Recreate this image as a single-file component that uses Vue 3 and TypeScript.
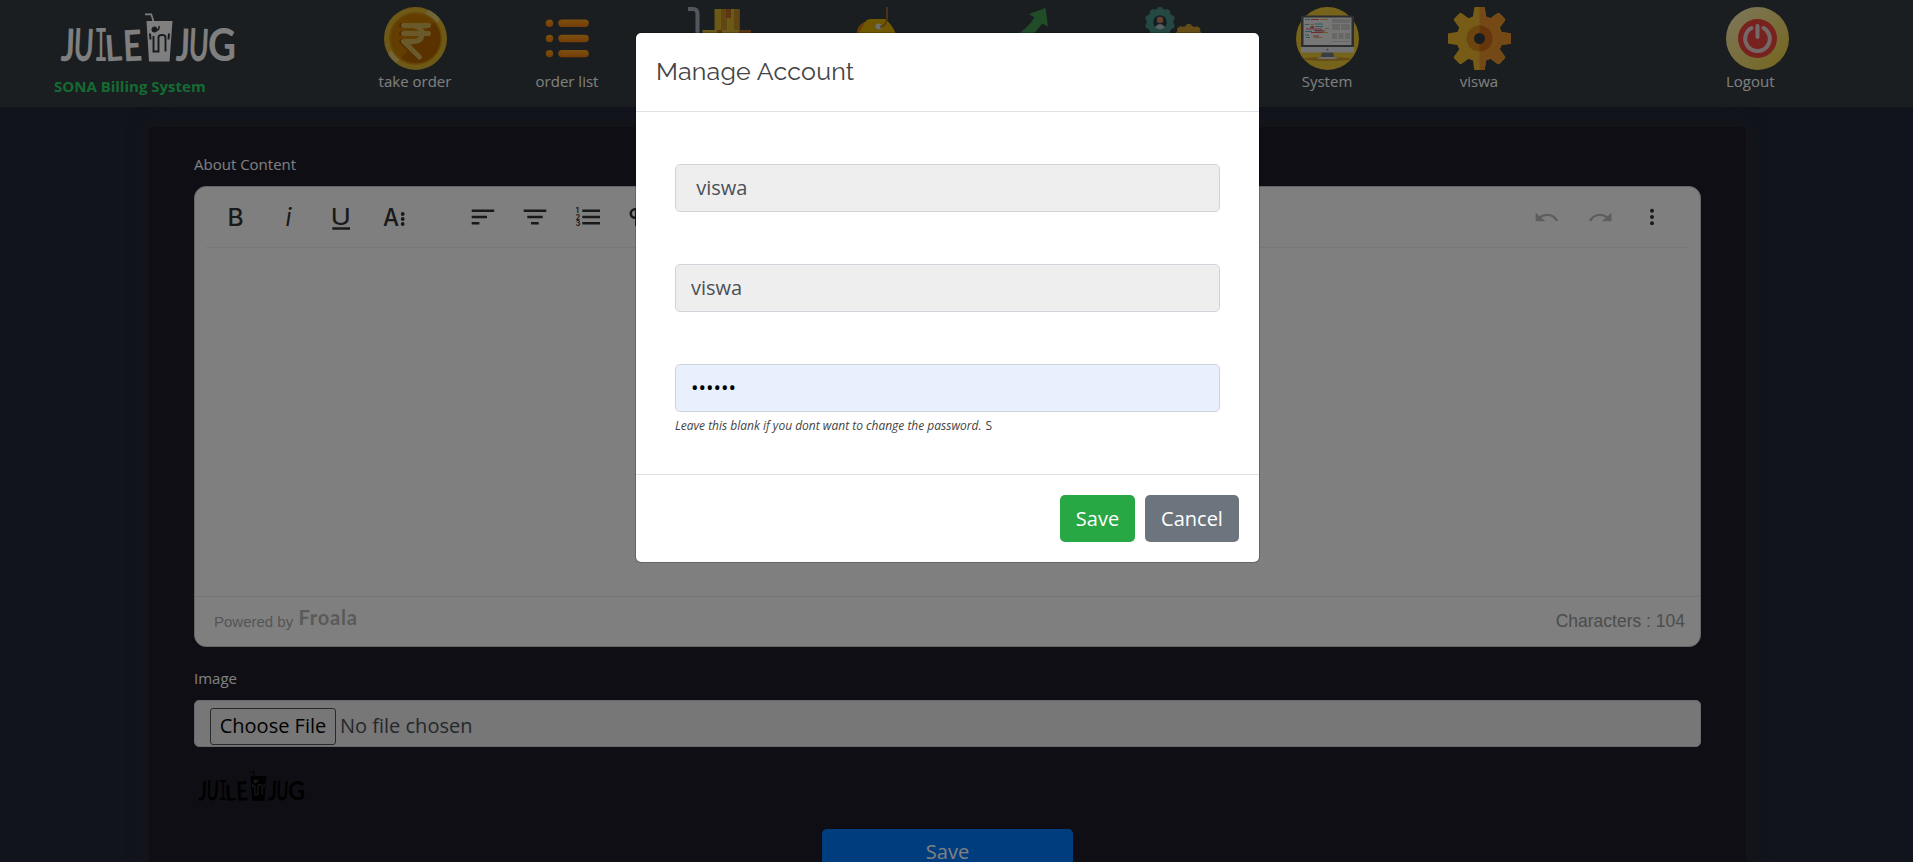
<script setup lang="ts">
import { ref } from 'vue'

interface NavItem {
  icon: string
  label: string
}

const navItems: NavItem[] = [
  { icon: 'rupee', label: 'take order' },
  { icon: 'list', label: 'order list' },
  { icon: 'cart', label: '' },
  { icon: 'tag', label: '' },
  { icon: 'arrow', label: '' },
  { icon: 'gears', label: '' },
  { icon: 'system', label: 'System' },
  { icon: 'gear', label: 'viswa' },
]

const name = ref(' viswa')
const username = ref('viswa')
const password = ref('secret')
const characters = 104
const teeth = [0, 45, 90, 135, 180, 225, 270, 315]
const smallTeeth = [0, 36, 72, 108, 144, 180, 216, 252, 288, 324]
</script>

<template>
  <div class="page">
    <svg class="defs" width="0" height="0" aria-hidden="true">
      <defs>
        <linearGradient id="pill" x1="0" y1="0" x2="0" y2="1">
          <stop offset="0" stop-color="#f9a01c" />
          <stop offset="1" stop-color="#ea7a0c" />
        </linearGradient>
        <linearGradient id="gold" x1="0" y1="0" x2="1" y2="1">
          <stop offset="0" stop-color="#fdefbd" />
          <stop offset="1" stop-color="#e8cc38" />
        </linearGradient>
        <symbol id="logo" viewBox="0 0 176 52">
          <g font-family="Lato, sans-serif" font-weight="700" fill="currentColor" stroke="none">
            <g font-size="45">
              <text x="1" y="48" textLength="14" lengthAdjust="spacingAndGlyphs" transform="rotate(2 8 30)">J</text>
              <text x="14" y="48" textLength="20" lengthAdjust="spacingAndGlyphs" transform="rotate(3 24 30)">U</text>
              <text
                x="34"
                y="47.500"
                font-family="DejaVu Sans Mono, monospace"
                font-size="44"
                font-weight="400"
                textLength="14"
                lengthAdjust="spacingAndGlyphs"
              >I</text>
              <text x="45" y="48" font-size="36" textLength="17" lengthAdjust="spacingAndGlyphs" transform="rotate(-4 53 36)">L</text>
              <text x="63" y="48" font-size="43" textLength="19" lengthAdjust="spacingAndGlyphs" transform="rotate(-3 72 32)">E</text>
              <text x="116" y="48" textLength="14" lengthAdjust="spacingAndGlyphs" transform="rotate(2 124 30)">J</text>
              <text x="129" y="48" textLength="20" lengthAdjust="spacingAndGlyphs" transform="rotate(3 140 30)">U</text>
              <text x="148" y="48" textLength="28" lengthAdjust="spacingAndGlyphs">G</text>
            </g>
          </g>
          <path d="M85 1.300h6.300l2.400 8" fill="none" stroke="currentColor" stroke-width="1.700" />
          <path d="M86.500 8h26l-3 40.500h-20.500z" fill="currentColor" />
          <g class="logo-cut">
            <path d="M93.500 23v15.500h5V24q0-2 3.500-2t3.500 2v14.500" fill="none" stroke-width="1.900" />
            <circle cx="94.500" cy="16.500" r="2.600" />
            <path d="M95 17q5 1 4-4" fill="none" stroke-width="1.500" />
            <path d="M90 20.500l.5 6M109 20.500l-.5 6" stroke-width="2" />
          </g>
        </symbol>
      </defs>
    </svg>

    <header class="navbar">
      <div class="brand">
        <svg class="logo" viewBox="0 0 176 52"><use href="#logo" /></svg>
        <span class="brand-name">SONA Billing System</span>
      </div>

      <nav class="nav">
        <a v-for="item in navItems" :key="item.icon" class="nav-item">
          <svg v-if="item.icon === 'rupee'" class="nav-icon" viewBox="0 0 63 63">
            <circle cx="31.500" cy="31.500" r="31.500" fill="#dcb42c" />
            <path d="M45 3a31.500 31.500 0 0 1 11 9L12 56a31 31 0 0 1-8-9z" fill="#e3ca72" />
            <circle cx="31.500" cy="31.500" r="26.500" fill="#cd9210" />
            <circle cx="31.500" cy="31.500" r="24.500" fill="#c77c00" />
            <path d="M50 15a24.500 24.500 0 0 1-33 36z" fill="#b46500" />
            <g fill="none" stroke="#a85700" stroke-width="5" stroke-linecap="round">
              <path d="M17.500 18.500h26M17.500 26.500h26M17.500 34.500l16 15" />
            </g>
            <g fill="none" stroke="#d5b456" stroke-width="5" stroke-linecap="round" stroke-linejoin="round">
              <path d="M19.500 18.500h25M19.500 26.500h25M31 19q7 2 7 7.500 0 8-9 8h-9.500l16 15.500" />
            </g>
          </svg>

          <svg v-else-if="item.icon === 'list'" class="nav-icon" viewBox="0 0 63 63">
            <g v-for="y in [16.300, 31.500, 46.600]" :key="y">
              <circle cx="13.500" :cy="y" r="3.700" fill="url(#pill)" />
              <rect x="22.300" :y="y - 3.700" width="30.500" height="7.400" rx="3.700" fill="url(#pill)" />
            </g>
          </svg>

          <svg v-else-if="item.icon === 'cart'" class="nav-icon" viewBox="0 0 63 63">
            <path d="M0 2h5q4.500 0 4.500 5v38h47" fill="none" stroke="#a7adb8" stroke-width="4" />
            <path d="M26.500 2h25v21h-25z" fill="#d6b52e" />
            <path d="M33 2h6v21h-6zM46 2h5.500v21H46z" fill="#c38b24" />
            <path d="M38 2h5v9h-5z" fill="#bd6a27" />
            <path d="M14.500 23h49v19h-49z" fill="#d6b52e" />
            <path d="M29 23h5v3h-5zM51 23h12v3H51z" fill="#b96a25" />
          </svg>

          <svg v-else-if="item.icon === 'tag'" class="nav-icon" viewBox="0 0 63 63">
            <path d="M16.500 27q1-9 7-11.500L29 13v14z" fill="#d27a10" />
            <path d="M18.500 27L24 17q2-5 7-5h14q7 5 11 15v20H18z" fill="#e0b000" />
            <circle cx="38.500" cy="19.500" r="3" fill="#ddd" />
            <path d="M47 0v12q-1 7-7 8" fill="none" stroke="#a66b2c" stroke-width="1.700" />
          </svg>

          <svg v-else-if="item.icon === 'arrow'" class="nav-icon" viewBox="0 0 63 63">
            <path d="M53.500 1L56 19.500l-6-3Q44 26 33 34H12Q33 26 42.500 10.500L37 7z" fill="#429850" />
          </svg>

          <svg v-else-if="item.icon === 'gears'" class="nav-icon" viewBox="0 0 63 63">
            <g fill="#489086">
              <rect
                v-for="a in smallTeeth"
                :key="a"
                x="13.500"
                y="0"
                width="5"
                height="8"
                rx="1.500"
                :transform="`rotate(${a} 16 15)`"
              />
              <circle cx="16" cy="15" r="13.500" />
            </g>
            <circle cx="16" cy="15" r="6.800" fill="#283c41" />
            <circle cx="16" cy="13" r="3.200" fill="#c9825d" />
            <path d="M11 20q5-6 10 0l-3 2h-4z" fill="#b7c2c4" />
            <g fill="#c99b2e">
              <rect
                v-for="a in smallTeeth"
                :key="a"
                x="42"
                y="17"
                width="5.500"
                height="8"
                rx="1.500"
                :transform="`rotate(${a} 44.700 34)`"
              />
              <circle cx="44.700" cy="34" r="15.300" />
            </g>
          </svg>

          <svg v-else-if="item.icon === 'system'" class="nav-icon" viewBox="0 0 63 63">
            <circle cx="31.500" cy="31.500" r="31.500" fill="#edc639" />
            <ellipse cx="31.500" cy="52" rx="24" ry="1.800" fill="#c9962b" />
            <path d="M26 45h11l1.500 6h-14z" fill="#777c80" />
            <path d="M21 52q2-2 5-2h11q3 0 5 2z" fill="#d8dadd" />
            <rect x="5" y="8.500" width="53" height="33" rx="1.500" fill="#5b5c61" />
            <path d="M5 40h53v4q0 1.500-1.500 1.500h-50Q5 45.500 5 44z" fill="#e5e6e8" />
            <rect x="7.500" y="10.500" width="48" height="27.500" fill="#eee" />
            <circle cx="31.500" cy="42.700" r="1" fill="#888" />
            <g stroke-width="1">
              <path d="M9 12.500h5M9 17.500h4M19 17h8M19 19.500h8M18 23.500h9M9 24.500h7M10 30.500h4M9 28h4" stroke="#57b8b2" />
              <path d="M15 12.500h8M15 19.500h3M14 20.500h4M10 22h16M19 24h10M15 25.500h14M17 29h6" stroke="#d95d62" />
              <path d="M24 12.500h8M14 17.500h4M29 21.500h4M27 25.500h5M18 30.500h8" stroke="#d9b94e" />
            </g>
            <path
              d="M36 12h18v4H36zM36 17h8v6h-8zM45 17h9v6h-9zM36 26h5v6h-5zM42.500 26h5v6h-5zM49 26h5v6h-5zM36 34h18v1H36z"
              fill="#cfd1cc"
            />
          </svg>

          <svg v-else class="nav-icon" viewBox="0 0 63 63">
            <g fill="#edb92d">
              <path
                v-for="a in teeth"
                :key="a"
                d="M24.500 12l1.700-11q.2-1.500 1.600-1.500h7.400q1.400 0 1.600 1.500l1.700 11z"
                :transform="`rotate(${a} 31.500 31.500)`"
              />
              <circle cx="31.500" cy="31.500" r="23" />
            </g>
            <clipPath id="right-half"><rect x="31.500" y="0" width="31.500" height="63" /></clipPath>
            <g fill="#e8932c" clip-path="url(#right-half)">
              <path
                v-for="a in teeth"
                :key="a"
                d="M24.500 12l1.700-11q.2-1.500 1.600-1.500h7.400q1.400 0 1.600 1.500l1.700 11z"
                :transform="`rotate(${a} 31.500 31.500)`"
              />
              <circle cx="31.500" cy="31.500" r="23" />
            </g>
            <circle cx="31.500" cy="31.500" r="13" fill="#d98a1f" />
            <path d="M31.500 18.500a13 13 0 0 1 0 26z" fill="#cf6a16" />
            <circle cx="31.500" cy="31.500" r="5.500" fill="#343d40" />
          </svg>
          <span class="nav-label">{{ item.label }}</span>
        </a>
      </nav>

      <a class="logout">
        <svg class="nav-icon" viewBox="0 0 63 63">
          <circle cx="31.500" cy="31.500" r="31.500" fill="url(#gold)" />
          <circle cx="31.500" cy="31.500" r="19.500" fill="#f0443e" />
          <g fill="none" stroke="#e8d2d0" stroke-width="4" stroke-linecap="round">
            <path d="M25.500 21a12.300 12.300 0 1 0 12 0M31.500 19v11" />
          </g>
        </svg>
        <span class="nav-label">Logout</span>
      </a>
    </header>

    <main class="panel">
      <label class="field-label">About Content</label>
      <section class="editor">
        <div class="toolbar">
          <div class="tools">
            <svg class="tool" viewBox="0 0 53 60">
              <text x="18.500" y="39" font-size="24.500" font-weight="500">B</text>
            </svg>
            <svg class="tool" viewBox="0 0 53 60">
              <text x="23.500" y="39" font-size="24.500" font-weight="400" font-style="italic">i</text>
            </svg>
            <svg class="tool" viewBox="0 0 53 60">
              <text x="15.500" y="37.500" font-size="23.500" font-weight="400" textLength="20.500" lengthAdjust="spacingAndGlyphs">U</text>
              <path d="M17.300 41.500H35" />
            </svg>
            <svg class="tool" viewBox="0 0 53 60">
              <text x="15" y="39" font-size="24.500" font-weight="500" textLength="16" lengthAdjust="spacingAndGlyphs">A</text>
              <circle v-for="y in [27, 32, 37]" :key="y" cx="34.700" :cy="y" r="1.900" />
            </svg>
          </div>
          <div class="tools">
            <svg class="tool" viewBox="0 0 53 60"><path d="M14.700 23.700H37.200M14.700 30H30M14.700 36.300h7.700" /></svg>
            <svg class="tool" viewBox="0 0 53 60"><path d="M13.700 23.700h22.600M17.300 30h15.400M21 36.300h7.700" /></svg>
            <svg class="tool" viewBox="0 0 53 60">
              <path d="M19.300 23.700H37M19.300 30H37M19.300 36.300H37" />
              <g font-size="7" font-weight="700">
                <text x="12.700" y="26.200">1</text>
                <text x="12.700" y="32.500">2</text>
                <text x="12.700" y="39">3</text>
              </g>
            </svg>
            <svg class="tool" viewBox="0 0 53 60">
              <path d="M29 22.300H19a4.200 4.200 0 0 0 0 8.500h1.500M20.300 22v17M26 22v17" />
            </svg>
          </div>
          <div class="tools tools-end">
            <svg class="tool disabled" viewBox="0 0 53 60">
              <path
                transform="translate(13.500 19) scale(1.100 .96)"
                d="M12.500 8c-2.650 0-5.050.99-6.900 2.600L2 7v9h9l-3.620-3.620c1.390-1.160 3.160-1.880 5.120-1.880 3.540 0 6.550 2.310 7.600 5.500l2.370-.78C21.080 11.030 17.150 8 12.500 8z"
              />
            </svg>
            <svg class="tool disabled" viewBox="0 0 53 60">
              <path
                transform="translate(40.700 19) scale(-1.100 .96)"
                d="M12.500 8c-2.650 0-5.050.99-6.900 2.600L2 7v9h9l-3.620-3.620c1.390-1.160 3.160-1.880 5.120-1.880 3.540 0 6.550 2.310 7.600 5.500l2.370-.78C21.080 11.030 17.150 8 12.500 8z"
              />
            </svg>
            <svg class="tool" viewBox="0 0 53 60">
              <circle v-for="y in [23.700, 30, 36.300]" :key="y" cx="26" :cy="y" r="2" />
            </svg>
          </div>
        </div>
        <div class="canvas"></div>
        <footer class="editor-foot">
          <span class="powered">Powered by <b>Froala</b></span>
          <span class="count">Characters : {{ characters }}</span>
        </footer>
      </section>

      <label class="field-label image-label">Image</label>
      <div class="file">
        <button type="button" class="choose">Choose File</button>
        <span>No file chosen</span>
      </div>
      <svg class="thumb" viewBox="0 0 176 52"><use href="#logo" /></svg>
      <button type="button" class="save">Save</button>
    </main>

    <div class="backdrop">
      <form class="modal" @submit.prevent>
        <header class="modal-head"><h5>Manage Account</h5></header>
        <div class="modal-body">
          <input v-model="name" class="control" type="text" />
          <input v-model="username" class="control" type="text" />
          <input v-model="password" class="control filled" type="password" />
          <small class="hint"><i>Leave this blank if you dont want to change the password.</i> <span>S</span></small>
        </div>
        <footer class="modal-foot">
          <button type="submit" class="btn green">Save</button>
          <button type="button" class="btn grey">Cancel</button>
        </footer>
      </form>
    </div>
  </div>
</template>

<style>
body {
  margin: 0;
  overflow: hidden;
}
</style>

<style scoped>
* {
  box-sizing: border-box;
}
.page {
  position: relative;
  height: 862px;
  overflow: hidden;
  background: #222839;
  color: #fff;
  font-family: 'Open Sans', sans-serif;
  font-size: 15px;
}
.defs {
  position: absolute;
}
.navbar {
  display: flex;
  height: 107px;
  background: #343c40;
}
.brand {
  display: flex;
  flex-direction: column;
  width: 339px;
  padding: 13px 0 0 54px;
}
.logo {
  width: 176px;
  height: 52px;
  margin-left: 6px;
  color: #fff;
}
.logo-cut {
  stroke: #30373a;
  fill: #30373a;
}
.brand-name {
  margin-top: 11px;
  color: #28d565;
  font-weight: 700;
  line-height: 20px;
}
.nav {
  display: flex;
  width: 1216px;
}
.nav-item {
  display: flex;
  flex-direction: column;
  align-items: center;
  width: 152px;
  padding-top: 7px;
}
.nav-icon {
  width: 63px;
  height: 63px;
}
.nav-label {
  height: 22px;
  line-height: 22px;
}
.logout {
  display: flex;
  flex-direction: column;
  padding: 7px 0 0 171px;
}
.panel {
  display: flex;
  flex-direction: column;
  width: 1597px;
  height: 800px;
  margin: 20px 0 0 149px;
  padding: 27px 45px 0;
  border-radius: 5px;
  background: #1f1d29;
  box-shadow: 0 0 20px rgba(45, 44, 40, 0.9);
}
.field-label {
  height: 32px;
  line-height: 21px;
}
.editor {
  height: 461px;
  border: 1px solid #ccc;
  border-radius: 12px;
  background: #fff;
}
.toolbar {
  display: flex;
  gap: 36px;
  height: 61px;
  margin: 0 11px;
  padding: 0 10px 0 3px;
  border-bottom: 1px solid #efefef;
}
.tools {
  display: flex;
}
.tools-end {
  margin-left: auto;
}
.tool {
  width: 53px;
  height: 60px;
  fill: #333;
  font-family: Inter, sans-serif;
}
.tool path {
  fill: none;
  stroke: #333;
  stroke-width: 2.5;
}
.tool.disabled path {
  fill: #bdbdbd;
  stroke: none;
}
.canvas {
  height: 348px;
}
.editor-foot {
  display: flex;
  justify-content: space-between;
  height: 50px;
  padding: 0 15px 0 19px;
  border-top: 1px solid #ebebeb;
  font-family: 'Liberation Sans', sans-serif;
}
.powered {
  padding-top: 13px;
  color: #aaa;
  font-size: 15px;
  line-height: 18px;
}
.powered b {
  position: relative;
  top: -2px;
  left: 1px;
  color: #b5b5b5;
  font-family: Lato, sans-serif;
  font-size: 20px;
  font-weight: 700;
  letter-spacing: 0.8px;
}
.count {
  padding-top: 14px;
  color: #999;
  font-size: 17.5px;
  line-height: 20px;
}
.image-label {
  margin-top: 21px;
}
.file {
  display: flex;
  align-items: flex-start;
  gap: 4px;
  height: 47px;
  padding: 7px 15px;
  border: 1px solid #ced4da;
  border-radius: 5px;
  background: #eee;
  color: #495057;
  font-size: 20px;
  line-height: 36px;
}
.choose {
  width: 126px;
  height: 37px;
  padding: 0 0 2px;
  border: 1px solid #555;
  border-radius: 3px;
  background: transparent;
  color: #000;
  font: 20px 'Open Sans', sans-serif;
}
.thumb {
  width: 107px;
  height: 32px;
  margin: 24px 0 0 4px;
  color: #000;
}
.save {
  align-self: center;
  width: 251px;
  height: 47px;
  margin-top: 26px;
  padding: 0 0 2px;
  border: 0;
  border-radius: 5px;
  background: #007bff;
  color: #fff;
  font: 20px 'Open Sans', sans-serif;
}
.backdrop {
  position: absolute;
  inset: 0;
  display: flex;
  align-items: flex-start;
  justify-content: center;
  padding-top: 32px;
  padding-right: 18px;
  background: rgba(0, 0, 0, 0.5);
}
.modal {
  width: 625px;
  height: 531px;
  border: 1px solid rgba(0, 0, 0, 0.2);
  border-radius: 6px;
  background: #fff;
  background-clip: padding-box;
  color: #444;
}
.modal-head {
  height: 79px;
  padding: 19px 20px;
  border-bottom: 1px solid #dee2e6;
}
.modal-head h5 {
  margin: 0;
  font: 400 25px / 38px Raleway, Lato, sans-serif;
  letter-spacing: 0.2px;
}
.modal-body {
  display: flex;
  flex-direction: column;
  height: 362px;
  padding: 52px 39px 0;
}
.control {
  height: 48px;
  margin-bottom: 52px;
  padding: 0 15px 2px;
  border: 1px solid #ced4da;
  border-radius: 5px;
  background: #eee;
  color: #495057;
  font: 20px 'Open Sans', sans-serif;
}
.filled {
  margin-bottom: 4px;
  background: #e8f0fe;
  color: #000;
}
.hint {
  font-size: 12px;
  line-height: 19px;
}
.hint span {
  margin-left: 1px;
}
.modal-foot {
  display: flex;
  justify-content: flex-end;
  gap: 10px;
  height: 88px;
  padding: 20px;
  border-top: 1px solid #dee2e6;
}
.btn {
  width: 75px;
  height: 47px;
  padding: 0;
  border: 0;
  border-radius: 5px;
  color: #fff;
  font: 500 20px 'Open Sans', sans-serif;
}
.green {
  background: #28a745;
}
.grey {
  width: 94px;
  background: #6c757d;
}
</style>
